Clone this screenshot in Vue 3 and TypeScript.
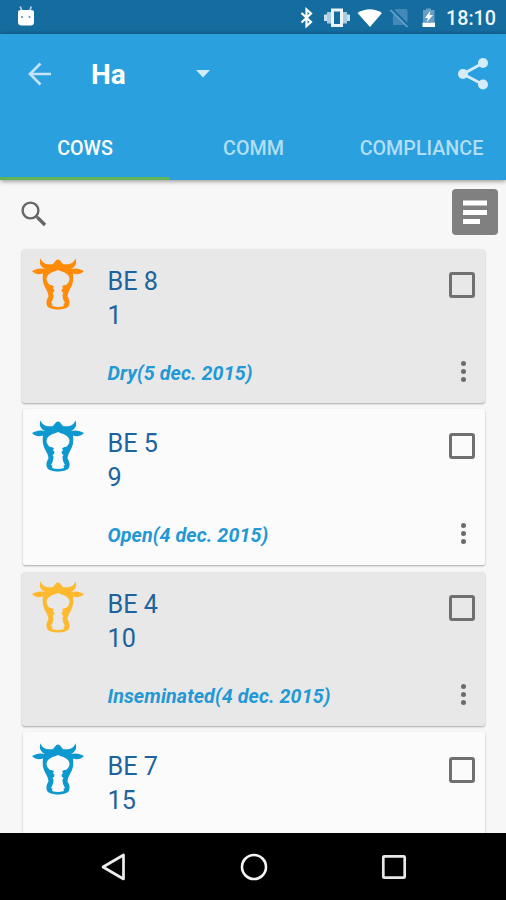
<script setup lang="ts">
import { ref } from 'vue'

interface Cow {
  name: string
  number: string
  status?: string
  color: string
  shaded: boolean
}

const tabs: string[] = ['COWS', 'COMM', 'COMPLIANCE']
const activeTab = ref('COWS')

const cows: Cow[] = [
  { name: 'BE 8', number: '1', status: 'Dry(5 dec. 2015)', color: 'orange', shaded: true },
  { name: 'BE 5', number: '9', status: 'Open(4 dec. 2015)', color: 'blue', shaded: false },
  { name: 'BE 4', number: '10', status: 'Inseminated(4 dec. 2015)', color: 'amber', shaded: true },
  { name: 'BE 7', number: '15', color: 'blue', shaded: false },
]
</script>

<template>
  <div class="screen">
    <div class="statusbar">
      <svg class="robot" width="18" height="21" viewBox="0 0 18 21">
        <path d="M3.2 0.5L5 5M14.2 0.5L12.8 5" stroke="#b9d2ee" stroke-width="1.7" />
        <path d="M1 6Q1 4 4 4H14Q17 4 17 6V16Q17 19.5 13.5 19.5H4.5Q1 19.5 1 16Z" fill="#fff" />
        <circle cx="5" cy="11" r="1" fill="#6687a8" /><circle cx="12.5" cy="11" r="1" fill="#6687a8" />
      </svg>
      <svg class="system" width="142" height="24" viewBox="0 0 142 24" fill="none">
        <path d="M2.500 7L12 16L7.500 20V3.500L12 7.500L2.500 16.500" stroke="#fff" stroke-width="2.200" />
        <rect x="33.500" y="4" width="9" height="15.500" stroke="#e9f4fb" stroke-width="3" />
        <path d="M30 6V17.500M46 6V17.500" stroke="#a9cbe2" stroke-width="4" />
        <path d="M26.500 8.500V15M49.500 8.500V15" stroke="#c9dfee" stroke-width="3" />
        <path d="M58.500 7Q71 -0.500 83 7L71 21Z" fill="#fff" />
        <path d="M96.500 3H107Q108.500 3 108.500 5V19H94V5.500Z" fill="#4388b6" />
        <path d="M92 3L109.500 20.500" stroke="#146c9f" stroke-width="3.500" />
        <path d="M91.500 4L108.500 21" stroke="#6da5c7" stroke-width="1.700" />
        <path d="M124 4H127V2.500H132V4H135.500V16H124Z" fill="#659fc3" />
        <path d="M123.500 16.500H136V21H123.500Z" fill="#fff" />
        <path d="M131.500 4.500L126 12H129L127.500 16.500L134 9H130.500Z" fill="#fff" />
      </svg>
      <span class="clock">18:10</span>
    </div>

    <header class="appbar">
      <div class="toolbar">
        <svg class="back" width="24" height="24" viewBox="0 0 24 24">
          <path d="M23 12H2M12.500 1.500L2 12L12.500 22.500" fill="none" stroke="#c4e4f6" stroke-width="2.700" />
        </svg>
        <h1>Ha</h1>
        <svg class="caret" width="14" height="8" viewBox="0 0 14 8"><path d="M0 0H14L7 7.500Z" fill="#d2ebfa" /></svg>
        <svg class="share" width="32" height="34" viewBox="0 0 32 34">
          <path d="M26 6L6 17L26 27.500" fill="none" stroke="#d5edfa" stroke-width="2.800" />
          <g fill="#d5edfa"><circle cx="26" cy="6" r="5" /><circle cx="6" cy="17" r="5" /><circle cx="26" cy="27.500" r="5" /></g>
        </svg>
      </div>
      <nav class="tabs">
        <button v-for="tab in tabs" :key="tab" :class="['tab', { active: tab === activeTab }]" @click="activeTab = tab">
          <span>{{ tab }}</span>
        </button>
      </nav>
    </header>

    <main class="content">
      <div class="searchrow">
        <svg class="search" width="26" height="26" viewBox="0 0 26 26" fill="none">
          <circle cx="9.500" cy="9.500" r="7.900" stroke="#666" stroke-width="2.400" />
          <path d="M15 15L16.500 16.500" stroke="#666" stroke-width="2.500" />
          <path d="M16.500 16.500L24 24" stroke="#666" stroke-width="3.400" />
        </svg>
        <div class="sort">
          <svg width="26" height="26" viewBox="0 0 26 26">
            <path d="M1 1.500H25V6.500H1ZM1 11H25V16H1ZM1 20H18V25H1Z" fill="#fff" />
          </svg>
        </div>
      </div>
      <div class="list">
        <article v-for="cow in cows" :key="cow.name" :class="['card', { shaded: cow.shaded }]">
          <svg :class="['cow', cow.color]" width="52" height="52" viewBox="0 0 52 52">
            <path
              fill-rule="evenodd"
              d="M8.700 .3C10 5 14 7 20.500 6.200C22.500 5 23.500 1.500 26 1.500C28.500 1.500 29.500 5 31.500 6.200C38 7 42 5 43.300 .3C45.500 5 43.500 9 39 11C43.500 9.800 48 10.500 52 13C48.500 16.800 44.500 16.800 41 15.500C42 23 40.500 27 37.800 31.500C36.500 34 35.500 36.500 35.500 38.500C37.500 41.500 38.500 45 36.500 48.500C33 52.500 19 52.500 15.500 48.500C13.500 45 14.500 41.500 16.500 38.500C16.500 36.500 15.500 34 14.200 31.500C11.500 27 10 23 11 15.500C7.500 16.800 3.500 16.800 0 13C4 10.500 8.500 9.800 13 11C8.500 9 6.500 5 8.700 .3ZM26 12C21.500 14 15 15 14.500 20.500C14.500 23.500 16 25.500 18 27C20 27 21.500 27.500 22 28.800L20.800 30L22.300 31.500V33.500L20.500 35L21.500 36.500C21.500 40 20.500 42.500 19 45L20.500 45.700L20 48C24 49.300 28 49.300 32 48L31.500 45.700L33 45C31.500 42.500 30.500 40 30.500 36.500L31.500 35L29.700 33.500V31.500L31.200 30L30 28.800C30.500 27.500 32 27 34 27C36 25.500 37.500 23.500 37.500 20.500C37 15 30.500 14 26 12Z"
            />
          </svg>
          <div class="details">
            <div class="line">{{ cow.name }}</div>
            <div class="line">{{ cow.number }}</div>
            <div v-if="cow.status" class="status">{{ cow.status }}</div>
          </div>
          <div class="actions">
            <span class="checkbox"></span>
            <span class="more"><i></i><i></i><i></i></span>
          </div>
        </article>
      </div>
    </main>

    <footer class="navbar">
      <svg width="26" height="28" viewBox="0 0 26 28"><path d="M23.500 2V26L3 14Z" fill="none" stroke="#eee" stroke-width="2.700" stroke-linejoin="round" /></svg>
      <svg width="28" height="28" viewBox="0 0 28 28"><circle cx="14" cy="14" r="12" fill="none" stroke="#f4f4f4" stroke-width="2.600" /></svg>
      <svg width="26" height="26" viewBox="0 0 26 26"><rect x="2.300" y="2.300" width="21.400" height="21.400" rx="1" fill="none" stroke="#e8e8e8" stroke-width="2.700" /></svg>
    </footer>
  </div>
</template>

<style>
body {
  margin: 0;
}
</style>

<style scoped>
.screen {
  width: 506px;
  height: 900px;
  display: flex;
  flex-direction: column;
  overflow: hidden;
  background: #f7f7f7;
  font-family: Roboto, "Liberation Sans", sans-serif;
}
.screen * {
  box-sizing: border-box;
}
svg {
  display: block;
  flex: none;
}
.statusbar {
  flex: none;
  height: 34px;
  display: flex;
  align-items: flex-start;
  padding-left: 17px;
  background: #146c9f;
  color: #eef6fb;
}
.robot {
  margin-top: 6px;
}
.system {
  margin: 6px 0 0 264px;
}
.clock {
  margin-left: 5px;
  font-size: 19.700px;
  font-weight: 500;
  line-height: 37px;
}
.appbar {
  position: relative;
  flex: none;
  height: 146px;
  display: flex;
  flex-direction: column;
  background: #2aa1de;
  box-shadow: 0 1px 5px rgba(0, 0, 0, 0.45);
}
.toolbar {
  height: 80px;
  display: flex;
  align-items: center;
  padding: 0 17px 0 28px;
}
h1 {
  width: 105px;
  margin: 2px 0 0 39px;
  font-size: 28px;
  font-weight: 700;
  line-height: 34px;
  color: #fff;
}
.share {
  margin-left: auto;
}
.tabs {
  flex: 1;
  display: grid;
  grid-template-columns: 170px 167px 169px;
}
.tab {
  display: flex;
  justify-content: center;
  padding: 22px 0 0;
  border: 0;
  border-bottom: 3px solid transparent;
  background: none;
  color: #b2def5;
  font-family: inherit;
  font-size: 19.700px;
  font-weight: 500;
  line-height: 25px;
}
.tab.active {
  color: #fff;
  border-color: #5eb457;
}
.content {
  flex: 1;
  min-height: 0;
  overflow: hidden;
}
.searchrow {
  height: 69px;
  display: flex;
  justify-content: space-between;
  padding: 9px 8px 0 21px;
}
.search {
  margin-top: 12px;
}
.sort {
  width: 46px;
  height: 46px;
  display: flex;
  align-items: center;
  justify-content: center;
  border-radius: 4px;
  background: #808080;
}
.list {
  display: flex;
  flex-direction: column;
  gap: 7.700px;
  padding: 0 21px 0 22px;
}
.card {
  flex: none;
  height: 156px;
  display: flex;
  margin: -2px 0 0 1px;
  padding: 11px 9px 0 9px;
  border-radius: 2px;
  background: #fbfbfb;
  box-shadow: 0 1px 2px rgba(0, 0, 0, 0.32);
}
.card.shaded {
  height: 154px;
  margin: 0;
  padding: 9px 9px 0 10px;
  border-radius: 3px;
  background: #e8e8e8;
}
.cow.orange {
  fill: #ff8b08;
}
.cow.blue {
  fill: #0d98d0;
}
.cow.amber {
  fill: #ffb92e;
}
.details {
  flex: 1;
  margin-left: 23.500px;
  padding-top: 6px;
}
.line {
  height: 34px;
  font-size: 25.200px;
  line-height: 36px;
  color: #20639c;
}
.status {
  margin-top: 29px;
  font-size: 19.700px;
  font-style: italic;
  font-weight: 700;
  line-height: 26px;
  letter-spacing: 0.090px;
  color: #2298d4;
}
.actions {
  width: 28px;
  display: flex;
  flex-direction: column;
  align-items: center;
  padding-top: 13.500px;
}
.checkbox {
  width: 26px;
  height: 26px;
  border: 3px solid #707070;
  border-radius: 3px;
}
.more {
  display: flex;
  flex-direction: column;
  gap: 3px;
  margin: 63.500px 0 0 2px;
}
.more i {
  width: 5px;
  height: 5px;
  border-radius: 50%;
  background: #6c6c6c;
}
.navbar {
  position: relative;
  flex: none;
  height: 67px;
  display: flex;
  align-items: center;
  justify-content: space-between;
  padding: 0 99px 0 100px;
  background: #000;
}
</style>
